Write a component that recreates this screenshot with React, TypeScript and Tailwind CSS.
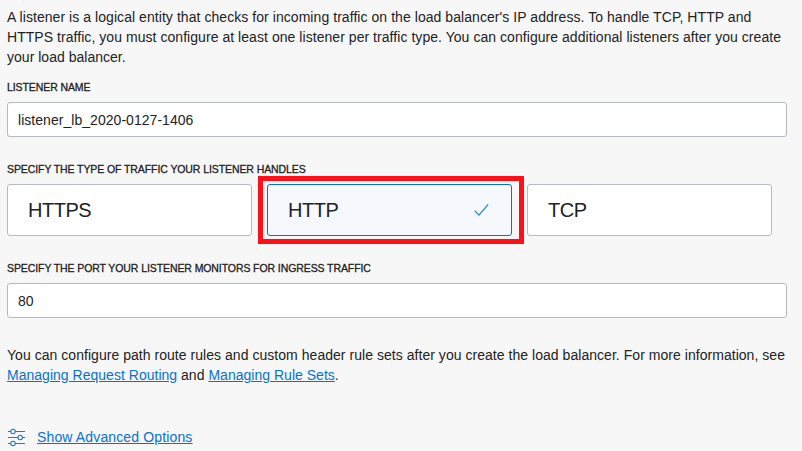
import type { ReactNode } from "react";

function Label({ children, className }: { children: ReactNode; className: string }) {
  return (
    <div
      className={
        "h-4 whitespace-nowrap text-[10.5px] leading-4 tracking-[-0.09px] [-webkit-text-stroke:0.3px_#222] " + className
      }
    >
      {children}
    </div>
  );
}

function Field({ value, className }: { value: string; className: string }) {
  return (
    <div
      className={
        "flex h-[35px] w-[780px] items-center rounded-[3px] border border-[#b4b9c3] bg-white px-[10px] pt-px tracking-[0.04px] " +
        className
      }
    >
      <span>{value}</span>
    </div>
  );
}

function Option({ label }: { label: string }) {
  return (
    <div className="flex h-[52px] w-[245px] items-center rounded-[3px] border border-[#b4b9c3] bg-white px-5 text-[20px] tracking-[-0.5px]">
      <span>{label}</span>
    </div>
  );
}

export default function App() {
  return (
    <div className="h-[451px] w-[802px] overflow-hidden bg-[#f7f7f7] pl-[7px] pt-[7px] font-['Liberation_Sans',Arial,sans-serif] text-[14px] leading-5 text-[#222]">
      <div className="whitespace-nowrap">
        <p className="tracking-[0.058px]">
          A listener is a logical entity that checks for incoming traffic on the load balancer's IP address. To handle TCP, HTTP and
        </p>
        <p className="tracking-[0.05px]">
          HTTPS traffic, you must configure at least one listener per traffic type. You can configure additional listeners after you create
        </p>
        <p className="tracking-[0.02px]">your load balancer.</p>
      </div>

      <Label className="mt-3">LISTENER NAME</Label>
      <Field className="mt-[7px]" value="listener_lb_2020-0127-1406" />

      <Label className="mt-6">SPECIFY THE TYPE OF TRAFFIC YOUR LISTENER HANDLES</Label>
      <div className="mt-[7px] flex gap-[15px]">
        <Option label="HTTPS" />
        <div className="relative flex h-[52px] w-[245px] items-center justify-between rounded-[3px] border border-[#0572ce] bg-[#f5f9fe] pl-5 pr-[22px] text-[20px] tracking-[-0.5px]">
          <span>HTTP</span>
          <svg width="16" height="14" viewBox="0 0 16 14" fill="none" stroke="#1b80d2" strokeWidth="1.2">
            <path d="M1.7 7.6 L6 12.2 L15.2 1.4" />
          </svg>
          <div className="absolute -left-[10px] -top-[9px] h-[68px] w-[266px] border-[5px] border-[#ff1018]" />
        </div>
        <Option label="TCP" />
      </div>

      <Label className="mt-6">SPECIFY THE PORT YOUR LISTENER MONITORS FOR INGRESS TRAFFIC</Label>
      <Field className="mt-[7px]" value="80" />

      <div className="mt-[27px] whitespace-nowrap">
        <p className="tracking-[0.04px]">
          You can configure path route rules and custom header rule sets after you create the load balancer. For more information, see
        </p>
        <p className="tracking-[0.02px]">
          <a className="text-[#0572ce] underline">Managing Request Routing</a> and{" "}
          <a className="text-[#0572ce] underline">Managing Rule Sets</a>.
        </p>
      </div>

      <div className="mt-[42px] flex items-center">
        <svg width="18" height="20" viewBox="0 0 18 20" fill="none" stroke="#2478bd" strokeWidth="1.1">
          <path d="M1 4.5H3.8M8.2 4.5H18M1 10.5H11M15.4 10.5H18M1 16.5H3.8M8.2 16.5H18" />
          <circle cx="6" cy="4.5" r="2.2" />
          <circle cx="13.2" cy="10.5" r="2.2" />
          <circle cx="6" cy="16.5" r="2.2" />
        </svg>
        <a className="ml-3 whitespace-nowrap tracking-[0.14px] text-[#0572ce] underline">Show Advanced Options</a>
      </div>
    </div>
  );
}
